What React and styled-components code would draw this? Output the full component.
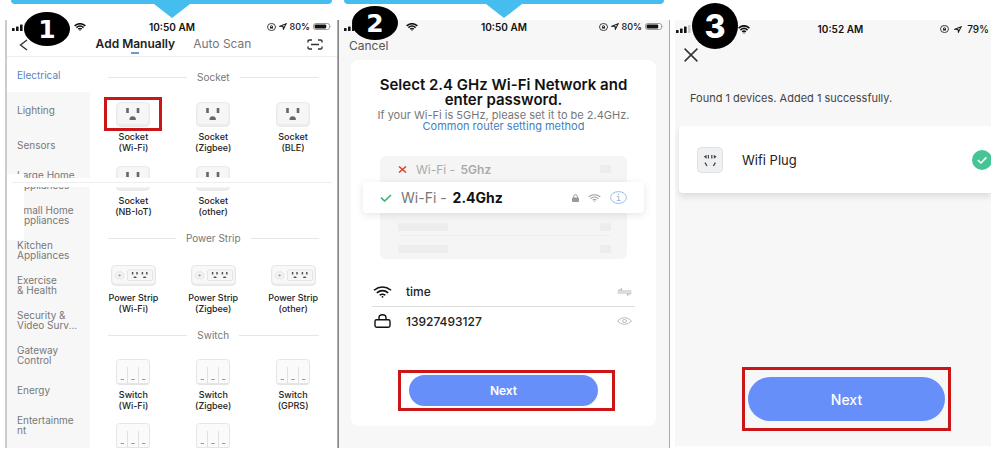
import React from 'react'
import styled, { createGlobalStyle } from 'styled-components'

const categories = [
  ['Electrical'],
  ['Lighting'],
  ['Sensors'],
  ['Large Home', 'Appliances'],
  ['Small Home', 'Appliances'],
  ['Kitchen', 'Appliances'],
  ['Exercise', '& Health'],
  ['Security &', 'Video Surv...'],
  ['Gateway', 'Control'],
  ['Energy'],
  ['Entertainme', 'nt'],
]

const sections = [
  {
    title: 'Socket',
    icon: 'socket',
    items: ['(Wi-Fi)', '(Zigbee)', '(BLE)', '(NB-IoT)', '(other)'],
    selected: '(Wi-Fi)',
  },
  {
    title: 'Power Strip',
    icon: 'strip',
    items: ['(Wi-Fi)', '(Zigbee)', '(other)'],
  },
  {
    title: 'Switch',
    icon: 'switch',
    items: ['(Wi-Fi)', '(Zigbee)', '(GPRS)', null, null],
  },
]

const App = () => (
  <>
    <GlobalStyle />
    <Page>
      <Column $inset>
        <Callout />
        <AddManually />
      </Column>
      <Column>
        <Callout />
        <SelectNetwork />
      </Column>
      <Column>
        <CalloutSpace />
        <DeviceFound />
      </Column>
    </Page>
  </>
)

const Callout = () => (
  <CalloutSpace>
    <CalloutBar />
    <CalloutPointer viewBox="0 0 36 14">
      <path d="M0 0H36L18 14Z" fill="#45bdee" />
    </CalloutPointer>
  </CalloutSpace>
)

const StatusBar = ({ time, battery, large }) => (
  <Status $large={large}>
    <StatusSide>
      <SignalIcon />
      <WifiIcon width={12} height={large ? 9 : 8} strokeWidth="2.6" />
    </StatusSide>
    <span>{time}</span>
    <StatusSide $end $large={large}>
      <LockRotationIcon />
      <LocationIcon />
      <StatusPercent $large={large}>{battery}</StatusPercent>
      {!large && <BatteryIcon />}
    </StatusSide>
  </Status>
)

const AddManually = () => (
  <Phone $shadow>
    <Badge>1</Badge>
    <StatusBar time="10:50 AM" battery="80%" />
    <NavBar>
      <IconButton aria-label="Back">
        <svg width="9" height="12" viewBox="0 0 9 12" fill="none" stroke="#333" strokeWidth="1.4">
          <path d="M8 1L1.5 6L8 11" />
        </svg>
      </IconButton>
      <Tabs>
        <Tab $active>Add Manually</Tab>
        <Tab>Auto Scan</Tab>
      </Tabs>
      <IconButton aria-label="Scan">
        <svg width="16" height="11" viewBox="0 0 16 11" fill="none" stroke="#333" strokeWidth="1.4">
          <path d="M1 3.6V2.2Q1 1 2.4 1H5M11 1H13.6Q15 1 15 2.2V3.6M15 7.4V8.8Q15 10 13.6 10H11M5 10H2.4Q1 10 1 8.8V7.4M4 5.5H12" />
        </svg>
      </IconButton>
    </NavBar>
    <Browser>
      <Sidebar>
        {categories.map((lines, index) => (
          <Category key={lines.join()} $active={index === 0}>
            {lines.map(line => (
              <span key={line}>{line}</span>
            ))}
          </Category>
        ))}
        <SidebarPatch />
      </Sidebar>
      <Catalog>
        {sections.map(section => (
          <section key={section.title}>
            <SectionTitle>{section.title}</SectionTitle>
            <DeviceGrid>
              {section.items.map((item, index) => (
                <Device key={index}>
                  <DeviceIcon $selected={item && item === section.selected}>
                    {section.icon === 'socket' && <SocketIcon />}
                    {section.icon === 'strip' && <StripIcon />}
                    {section.icon === 'switch' && <SwitchIcon />}
                  </DeviceIcon>
                  {item && (
                    <>
                      <span>{section.title}</span>
                      <span>{item}</span>
                    </>
                  )}
                </Device>
              ))}
            </DeviceGrid>
          </section>
        ))}
      </Catalog>
      <Seam />
    </Browser>
  </Phone>
)

const SelectNetwork = () => (
  <Phone $grey $lined>
    <Badge $raised>2</Badge>
    <StatusBar time="10:50 AM" battery="80%" />
    <CancelButton>Cancel</CancelButton>
    <Card>
      <Title>
        Select 2.4 GHz Wi-Fi Network and
        <br />
        enter password.
      </Title>
      <Hint>
        If your Wi-Fi is 5GHz, please set it to be 2.4GHz.
        <a href="#router">Common router setting method</a>
      </Hint>
      <NetworkList>
        <NetworkRow>
          <svg width="9" height="7" viewBox="0 0 9 7" stroke="#d9483b" strokeWidth="1.6">
            <path d="M1 .5L8 6.5M8 .5L1 6.5" />
          </svg>
          <span>
            Wi-Fi - <b>5Ghz</b>
          </span>
          <Placeholder $small />
        </NetworkRow>
        <NetworkChoice>
          <svg width="12" height="8" viewBox="0 0 12 8" fill="none" stroke="#2fb574" strokeWidth="1.6">
            <path d="M1 3.6L4.6 7L11 1" />
          </svg>
          <span>
            Wi-Fi - <b>2.4Ghz</b>
          </span>
          <NetworkIcons>
            <svg width="7" height="8" viewBox="0 0 7 8">
              <rect y="3.4" width="7" height="4.6" rx=".8" fill="#999" />
              <path d="M1.6 4V2.6A1.9 1.9 0 0 1 5.4 2.6V4" fill="none" stroke="#999" />
            </svg>
            <WifiIcon width="13" height="8" color="#999" strokeWidth="1.8" />
            <svg width="17" height="13" viewBox="0 0 17 13" fill="none" stroke="#9dbbe0">
              <ellipse cx="8.5" cy="6.5" rx="7.9" ry="5.9" />
              <path d="M7 5.4H8.8V9.4M6.8 9.5H10.6M8 3.4H9.2" />
            </svg>
          </NetworkIcons>
        </NetworkChoice>
        <EmptyRow>
          <Placeholder />
          <Placeholder $small />
        </EmptyRow>
        <EmptyRow>
          <Placeholder />
          <Placeholder $small />
        </EmptyRow>
      </NetworkList>
      <Fields>
        <Field>
          <WifiIcon width="19" height="12" color="#111" strokeWidth="1.7" />
          <input aria-label="Network" defaultValue="time" />
          <svg width="15" height="8" viewBox="0 0 15 8" fill="none" stroke="#bbb">
            <path d="M14.5 3H.8L4.6 .5V3M.5 5H14.2L10.4 7.5V5" />
          </svg>
        </Field>
        <Field>
          <svg width="19" height="14" viewBox="0 0 19 14" fill="none" stroke="#111" strokeWidth="1.4">
            <rect x="2" y="5.8" width="15" height="7.4" rx="1.6" />
            <path d="M6 5.8V3.8Q6 .8 9.5 .8T13 3.8V5.8" />
          </svg>
          <input aria-label="Password" defaultValue="13927493127" />
          <svg width="15" height="8" viewBox="0 0 15 8" fill="none" stroke="#bbb">
            <path d="M.6 4Q3.6 .6 7.5 .6T14.4 4Q11.4 7.4 7.5 7.4T.6 4Z" />
            <ellipse cx="7.5" cy="4" rx="2" ry="1.5" />
          </svg>
        </Field>
      </Fields>
      <Highlight>
        <NextButton>Next</NextButton>
      </Highlight>
    </Card>
  </Phone>
)

const DeviceFound = () => (
  <Phone $grey $last>
    <Badge $round>3</Badge>
    <StatusBar time="10:52 AM" battery="79%" large />
    <CloseButton aria-label="Close">
      <svg width="14" height="14" viewBox="0 0 14 14" stroke="#333" strokeWidth="1.5">
        <path d="M.6 .6L13.4 13.4M13.4 .6L.6 13.4" />
      </svg>
    </CloseButton>
    <Found>Found 1 devices. Added 1 successfully.</Found>
    <FoundDevice>
      <PlugIcon />
      <span>Wifi Plug</span>
      <svg width="20" height="20" viewBox="0 0 20 20" fill="none">
        <circle cx="10" cy="10" r="10" fill="#45c596" />
        <path d="M5.8 10L9 13L14.4 7.4" stroke="#fff" strokeWidth="1.6" />
      </svg>
    </FoundDevice>
    <Highlight $large>
      <NextButton $large>Next</NextButton>
    </Highlight>
  </Phone>
)

const SignalIcon = () => (
  <svg width="16" height="8" viewBox="0 0 16 8" fill="#111">
    <rect y="5" width="2.6" height="3" rx=".6" />
    <rect x="4" y="3.6" width="2.6" height="4.4" rx=".6" />
    <rect x="8" y="1.6" width="2.6" height="6.4" rx=".6" />
    <rect x="12" width="2.6" height="8" rx=".6" fill="#ccc" />
  </svg>
)

const WifiIcon = ({ width, height, color = '#111', strokeWidth }) => (
  <svg width={width} height={height} viewBox="0 0 20 14" preserveAspectRatio="none" fill="none" stroke={color} strokeWidth={strokeWidth}>
    <path d="M1 5Q10 -2.6 19 5M4 8Q10 2.8 16 8M7 10.8Q10 8.4 13 10.8" />
    <circle cx="10" cy="12.6" r="1" fill={color} stroke="none" />
  </svg>
)

const LockRotationIcon = () => (
  <svg width="9" height="8" viewBox="0 0 9 9" preserveAspectRatio="none" fill="none" stroke="#222" strokeWidth=".9">
    <circle cx="4.5" cy="4.5" r="4" />
    <rect x="3" y="4.2" width="3" height="2" fill="#222" stroke="none" />
    <path d="M3.5 4.4V3.4Q4.5 2 5.5 3.4V4.4" />
  </svg>
)

const LocationIcon = () => (
  <svg width="8" height="7" viewBox="0 0 8 8" preserveAspectRatio="none" fill="none" stroke="#222" strokeWidth="1.1">
    <path d="M7.2 .8L.9 3.7L4 4L4.4 7.1Z" />
  </svg>
)

const BatteryIcon = () => (
  <svg width="19" height="7" viewBox="0 0 19 7">
    <rect x=".5" y=".5" width="16" height="6" rx="2" fill="none" stroke="#999" />
    <rect x="1.6" y="1.4" width="11.6" height="4.2" rx="1" fill="#111" />
    <path d="M17.6 2.4Q19 3.5 17.6 4.6Z" fill="#888" />
  </svg>
)

const SocketIcon = () => (
  <svg width="34" height="25" viewBox="0 0 34 25">
    <rect x=".5" y=".5" width="33" height="24" rx="4" fill="#ececec" stroke="#e9e9e9" />
    <rect x="1.5" y="1" width="31" height="21" rx="3" fill="#f6f6f6" />
    <path d="M11.5 6V11M22 6V11" stroke="#666" strokeWidth="2.6" />
    <path d="M13.6 18V16.6Q14 14.2 16.7 14.2T19.8 16.6V18Z" fill="#666" />
  </svg>
)

const StripIcon = () => (
  <svg width="45" height="21" viewBox="0 0 45 21">
    <rect x=".5" y=".5" width="44" height="20" rx="4" fill="#ececec" stroke="#e6e6e6" />
    <rect x="1.5" y="1" width="42" height="17.5" rx="3" fill="#f8f8f8" />
    <ellipse cx="8.6" cy="10.4" rx="4.4" ry="3.6" fill="#f3f3f3" stroke="#ddd" strokeWidth=".7" />
    <path d="M7 10.4H10.2M8.6 9V11.6" stroke="#aaa" strokeWidth=".9" />
    <rect x="16.5" y="5" width="25" height="10.6" rx="1" fill="#f6f6f6" stroke="#ddd" strokeWidth=".7" />
    <path d="M21.6 7V9.6M26 7V9.6M31.4 7V9.6M35.8 7V9.6" stroke="#555" strokeWidth="1.5" />
    <path d="M22.4 13L23 11.4H25L25.8 13ZM32 13L32.6 11.4H34.6L35.4 13Z" fill="#555" />
  </svg>
)

const SwitchIcon = () => (
  <svg width="34" height="26" viewBox="0 0 34 26">
    <rect x=".5" y=".5" width="33" height="25" rx="3" fill="#fafafa" stroke="#e6e6e6" />
    <path d="M11.5 8V24M22.5 8V24" stroke="#e0e0e0" />
    <path d="M1.5 24.8H32.5" stroke="#ddd" />
    <path d="M4.6 20.5H8M15.2 20.5H18.6M26 20.5H29.4" stroke="#999" strokeWidth="1.2" />
  </svg>
)

const PlugIcon = () => (
  <svg width="26" height="26" viewBox="0 0 26 26">
    <rect x=".5" y=".5" width="25" height="25" rx="4" fill="#eff0f2" stroke="#e0e1e3" />
    <path d="M11.4 8V11.6M14.8 8V11.6" stroke="#444" strokeWidth="1.2" />
    <path d="M9.6 7.8V11.8L6.8 9.8ZM16.8 7.8V11.8L19.6 9.8Z" fill="#444" />
    <path d="M8 15.6L10 19M18.4 15.6L16.4 19" stroke="#444" strokeWidth="1.3" />
  </svg>
)

const GlobalStyle = createGlobalStyle`
  * {
    box-sizing: border-box;
  }

  body {
    margin: 0;
    background: #fff;
    font-family: Inter, 'Liberation Sans', sans-serif;
  }

  button {
    border: 0;
    padding: 0;
    background: none;
    font-family: inherit;
  }

  svg {
    display: block;
    flex-shrink: 0;
  }
`

const Page = styled.main`
  display: grid;
  grid-template-columns: 338fr 332fr 330fr;
  height: 100vh;
  overflow: hidden;
`

const Column = styled.div`
  display: flex;
  flex-direction: column;
  min-height: 0;
  min-width: 0;
  padding-left: ${props => props.$inset && '5px'};
`

const CalloutSpace = styled.div`
  height: 20px;
  flex-shrink: 0;
  padding: 0 6px;
`

const CalloutBar = styled.div`
  height: 4px;
  border-radius: 0 0 12px 12px;
  background: #45bdee;
`

const CalloutPointer = styled.svg`
  width: 36px;
  height: 14px;
  margin: 0 auto;
`

const Phone = styled.article`
  position: relative;
  display: flex;
  flex-direction: column;
  flex: 1;
  min-height: 0;
  margin: ${props => (props.$last ? '0 9px 4px 5px' : '0 0 2px')};
  background: ${props => (props.$grey ? '#f7f7f7' : '#fff')};
  border-left: ${props => props.$shadow && '2px solid #ccc'};
  border-left: ${props => props.$lined && '1px solid #888'};
  border-right: ${props => (props.$shadow || props.$lined) && '1px solid #aaa'};
`

const Badge = styled.div`
  position: absolute;
  left: 17px;
  top: -8px;
  display: flex;
  align-items: center;
  justify-content: center;
  width: 46px;
  height: 34px;
  border-radius: 50%;
  background: #000;
  color: #fff;
  font: bold 25px 'DejaVu Sans', sans-serif;

  ${props =>
    props.$raised &&
    `
    left: 13px;
    top: -14px;
  `}

  ${props =>
    props.$round &&
    `
    top: -17px;
    height: 46px;
    font: 800 32px Inter, sans-serif;
  `}
`

const Status = styled.div`
  display: grid;
  grid-template-columns: ${props => (props.$large ? '9fr auto 8fr' : '1fr auto 1fr')};
  align-items: center;
  flex-shrink: 0;
  height: ${props => (props.$large ? '18px' : '13px')};
  padding: ${props => (props.$large ? '0 2px 0 1px' : '0 5px')};
  color: #111;
  font-size: 10px;
  font-weight: 600;
`

const StatusSide = styled.div`
  display: flex;
  align-items: center;
  justify-content: ${props => (props.$end ? 'flex-end' : 'flex-start')};
  gap: ${props => (props.$end ? (props.$large ? '5px' : '3px') : '46px')};
`

const StatusPercent = styled.span`
  font-size: ${props => (props.$large ? '10px' : '9px')};
  font-weight: 500;
`

const NavBar = styled.header`
  display: flex;
  align-items: center;
  justify-content: space-between;
  flex-shrink: 0;
  height: 24px;
  padding: 0 14px 0 12px;
  border-bottom: 1px solid #eee;
`

const IconButton = styled.button`
  display: flex;
`

const Tabs = styled.nav`
  display: flex;
  gap: 18px;
  margin-left: 12px;
`

const Tab = styled.button`
  display: flex;
  flex-direction: column;
  align-items: center;
  height: 18px;
  color: ${props => (props.$active ? '#222' : '#777')};
  font-size: 12px;
  font-weight: ${props => (props.$active ? 600 : 400)};
  line-height: 16px;

  &::after {
    content: '';
    width: 8px;
    height: 2px;
    flex-shrink: 0;
    background: ${props => (props.$active ? '#6d98cf' : 'none')};
  }
`

const Browser = styled.div`
  position: relative;
  display: flex;
  flex: 1;
  min-height: 0;
  overflow: hidden;
`

const Sidebar = styled.aside`
  position: relative;
  width: 25%;
  flex-shrink: 0;
  background: #f7f7f7;
`

const Category = styled.button`
  display: flex;
  flex-direction: column;
  justify-content: center;
  width: 100%;
  height: 35px;
  padding-left: 10px;
  background: ${props => (props.$active ? '#fff' : 'none')};
  color: ${props => (props.$active ? '#5585c2' : '#777')};
  font-size: 10px;
  line-height: 10px;
  text-align: left;
  white-space: nowrap;
`

const SidebarPatch = styled.div`
  position: absolute;
  left: 0;
  top: 117px;
  width: 17px;
  height: 66px;
  background: #fff;
`

const Seam = styled.div`
  position: absolute;
  left: 5px;
  right: 5px;
  top: 121px;
  height: 9px;
  border: solid #fff;
  border-width: 4px 0;
  background: #eee;
`

const Catalog = styled.div`
  display: flex;
  flex-direction: column;
  gap: 1px;
  flex: 1;
  padding: 0 4px;
`

const SectionTitle = styled.h3`
  display: flex;
  align-items: center;
  gap: 10px;
  height: 40px;
  margin: 0;
  padding: 0 14px;
  color: #777;
  font-size: 10px;
  font-weight: 400;

  &::before,
  &::after {
    content: '';
    flex: 1;
    height: 1px;
    background: #e6e6e6;
  }
`

const DeviceGrid = styled.div`
  display: grid;
  grid-template-columns: repeat(3, 1fr);
  row-gap: 8px;
`

const Device = styled.button`
  display: flex;
  flex-direction: column;
  align-items: center;
  color: #222;
  font-size: 9px;
  font-weight: 500;
  line-height: 11px;
`

const DeviceIcon = styled.div`
  display: flex;
  align-items: center;
  justify-content: center;
  width: 58px;
  height: 34px;
  border: ${props => (props.$selected ? '3px solid #cb1517' : 'none')};
`

const CancelButton = styled.button`
  align-self: flex-start;
  height: 24px;
  flex-shrink: 0;
  margin-left: 10px;
  color: #555;
  font-size: 12px;
`

const Card = styled.section`
  margin: 3px 13px 0 12px;
  padding: 17px 17px 15px;
  border-radius: 8px;
  background: #fff;
`

const Title = styled.h1`
  margin: 0;
  color: #111;
  font-size: 15px;
  font-weight: 600;
  line-height: 15px;
  text-align: center;
  white-space: nowrap;
`

const Hint = styled.p`
  display: flex;
  flex-direction: column;
  margin: 3px 0 24px;
  color: #777;
  font-size: 11px;
  line-height: 11px;
  text-align: center;
  white-space: nowrap;

  a {
    color: #3f7fbf;
    text-decoration: none;
  }
`

const NetworkList = styled.div`
  margin: 0 12px;
  padding-bottom: 2px;
  border-radius: 6px;
  background: #f5f5f5;
`

const NetworkRow = styled.div`
  display: flex;
  align-items: center;
  gap: 9px;
  height: 26px;
  padding: 0 16px 0 18px;
  color: #aaa;
  font-size: 12px;

  b {
    margin-left: 2px;
    font-weight: 600;
  }
`

const NetworkChoice = styled.div`
  display: flex;
  align-items: center;
  gap: 9px;
  height: 31px;
  margin: 0 -17px;
  padding: 0 17px;
  border-radius: 4px;
  background: #fff;
  box-shadow: 0 2px 8px rgba(0, 0, 0, 0.1);
  color: #777;
  font-size: 14px;

  b {
    margin-left: 2px;
    color: #111;
    font-weight: 700;
  }
`

const NetworkIcons = styled.div`
  display: flex;
  align-items: center;
  gap: 9px;
  margin-left: auto;
`

const EmptyRow = styled.div`
  display: flex;
  align-items: flex-end;
  height: 22px;
  margin: 0 16px 0 18px;
  padding-bottom: 4px;

  & + & {
    border-top: 1px solid #eee;
  }
`

const Placeholder = styled.div`
  width: ${props => (props.$small ? '11px' : '50px')};
  height: 8px;
  margin-left: ${props => props.$small && 'auto'};
  background: #ededed;
`

const Fields = styled.div`
  margin: 18px 4px 35px;
`

const Field = styled.div`
  display: flex;
  align-items: center;
  gap: 14px;
  height: 29px;
  padding: 0 3px 0 1px;

  & + & {
    border-top: 1px solid #ddd;
  }

  input {
    flex: 1;
    min-width: 0;
    padding: 0;
    border: 0;
    outline: 0;
    background: none;
    color: #222;
    font: 500 12px Inter, sans-serif;
  }
`

const Highlight = styled.div`
  margin: ${props => (props.$large ? 'auto 40px 15px 67px' : '0 24px 0 30px')};
  padding: ${props => (props.$large ? '7px 3px' : '2px 14px 2px 8px')};
  border: 3px solid #cb1517;
`

const NextButton = styled.button`
  display: block;
  width: 100%;
  height: ${props => (props.$large ? '44px' : '31px')};
  border-radius: 22px;
  background: #668ffa;
  color: #fff;
  font-size: ${props => (props.$large ? '14px' : '12px')};
  font-weight: ${props => (props.$large ? 500 : 600)};
`

const CloseButton = styled.button`
  align-self: flex-start;
  display: flex;
  margin: 10px 0 0 9px;
`

const Found = styled.p`
  margin: 28px 15px 0;
  color: #444;
  font-size: 11px;
  line-height: 16px;
  white-space: nowrap;
`

const FoundDevice = styled.div`
  display: flex;
  align-items: center;
  gap: 19px;
  height: 67px;
  margin: 20px 0 0 4px;
  padding-left: 18px;
  border-radius: 4px 0 0 4px;
  background: #fff;
  box-shadow: 0 4px 6px rgba(0, 0, 0, 0.1);
  clip-path: inset(0 0 -12px -8px);
  color: #222;
  font-size: 13px;

  svg:last-child {
    margin: 0 -1px 0 auto;
  }
`

export default App
